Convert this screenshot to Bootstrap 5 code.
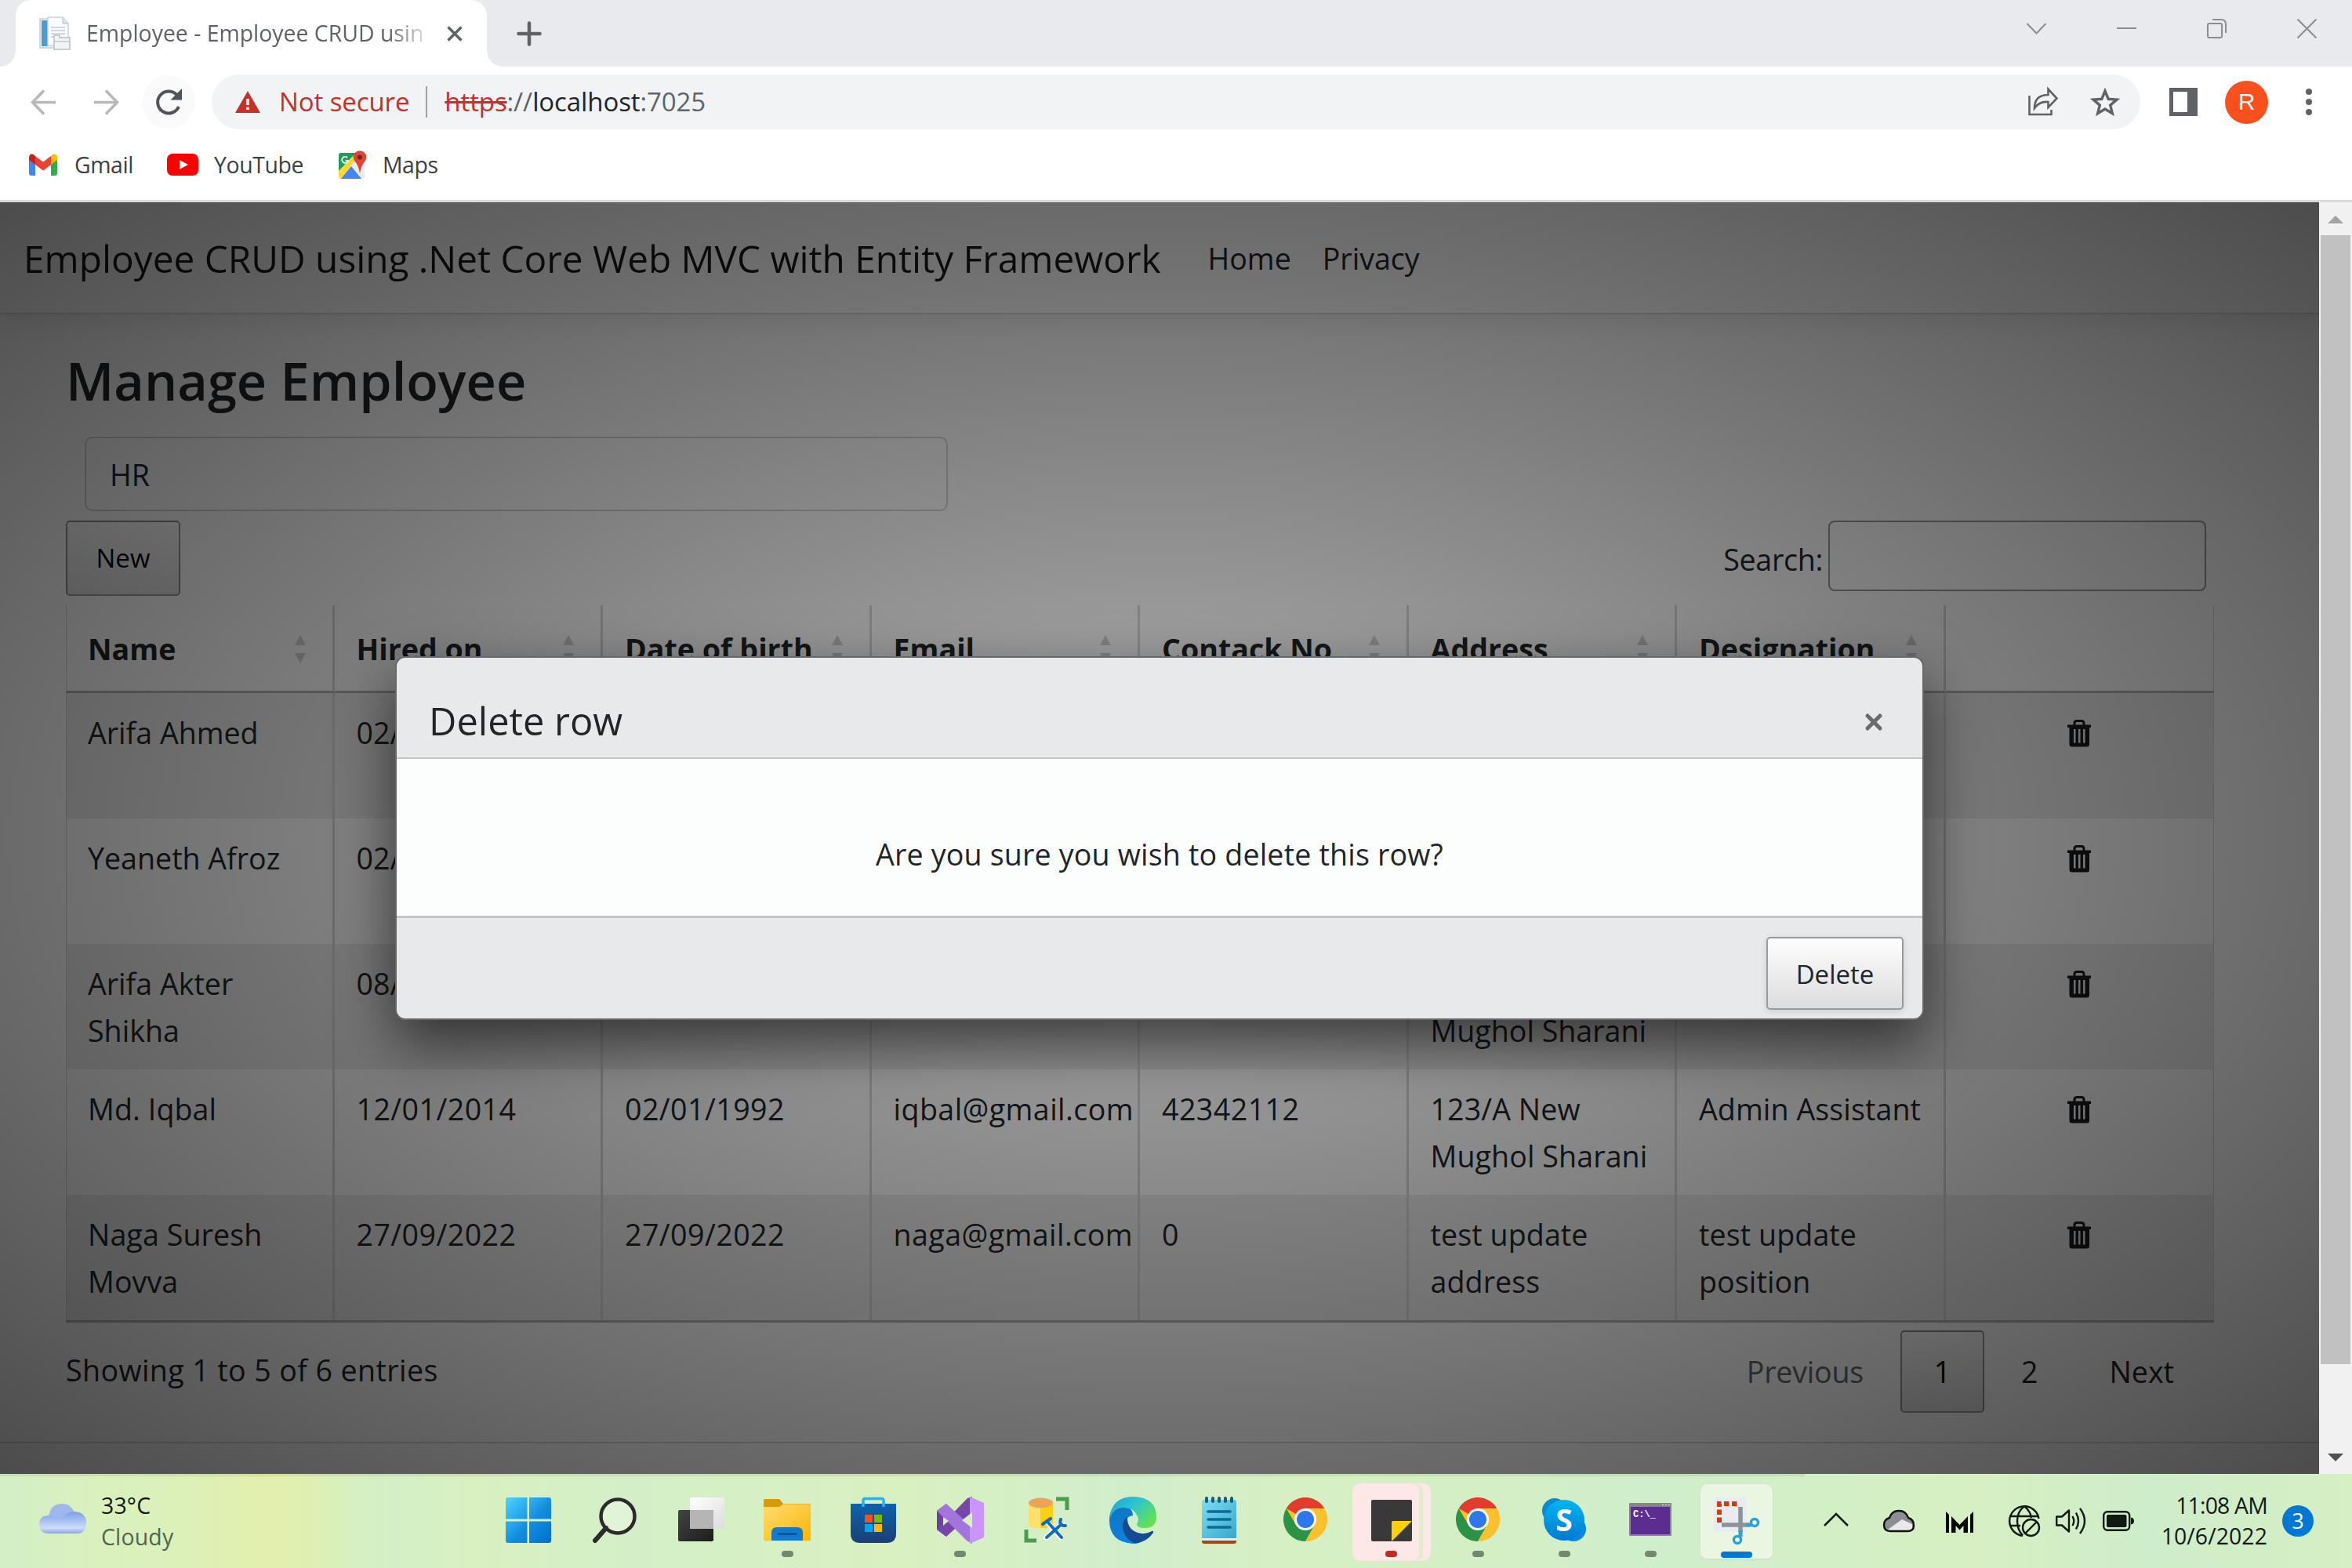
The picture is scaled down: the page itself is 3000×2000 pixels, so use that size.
<!DOCTYPE html>
<html lang="en">
<head>
<meta charset="utf-8">
<title>Employee - Employee CRUD using .Net Core Web MVC</title>
<link href="https://cdn.jsdelivr.net/npm/bootstrap@5.3.0/dist/css/bootstrap.min.css" rel="stylesheet">
<style>
  html { font-size: 40px; }
  body { width: 3000px; height: 2000px; overflow: hidden; font-family: "Open Sans", "Noto Sans", sans-serif; font-size: 37.6px; line-height: 60px; color: #212529; background: #fff; }
  svg { display: block; flex: none; overflow: visible; }

  /* browser frame */
  .tabstrip { height: 85px; background: #e8eaed; padding-left: 20px; flex: none; }
  .tab-active { width: 601px; height: 85px; background: #fff; border-radius: 20px 20px 0 0; padding-left: 30px; position: relative; }
  .tab-active::before, .tab-active::after { content: ""; position: absolute; bottom: 0; width: 20px; height: 20px; }
  .tab-active::before { left: -20px; background: radial-gradient(circle at 0 0, transparent 19.5px, #fff 20px); }
  .tab-active::after { right: -20px; background: radial-gradient(circle at 100% 0, transparent 19.5px, #fff 20px); }
  .tab-title { width: 437px; margin: -2px 0 0 20px; font-size: 28.4px; color: #5f6368; white-space: nowrap; -webkit-mask-image: linear-gradient(90deg, #000 385px, transparent 445px); mask-image: linear-gradient(90deg, #000 385px, transparent 445px); }
  .win-controls { margin-right: 45px; gap: 90px; padding-bottom: 12px; }
  .toolbar { height: 90px; flex: none; }
  .reload { width: 68px; height: 68px; border-radius: 50%; background: #fafafa; margin-left: 29px; }
  .omnibox { width: 2460px; height: 70px; border-radius: 35px; background: #f1f3f4; margin-left: 21px; padding: 0 26px 0 30px; font-size: 33px; color: #5f6368; letter-spacing: -.1px; }
  .warn { color: #c5302a; }
  .omni-sep { width: 2px; height: 40px; background: #9aa0a6; margin: 0 22px 0 21px; }
  .avatar { width: 55px; height: 55px; border-radius: 50%; background: #f8511d; color: #fff; font: 30px "Liberation Sans", sans-serif; margin-left: 35px; }
  .bookmarks { height: 80px; padding: 0 0 10px 37px; font-size: 28.4px; color: #3c4043; flex: none; letter-spacing: -.4px; }
  .frame-line { height: 3px; background: #d9dadb; flex: none; }

  /* web page */
  .viewport { height: 1622px; flex: none; }
  .site { width: 2958px; height: 1622px; position: relative; overflow: hidden; background: #fff; }
  .site-nav { height: 143px; padding: 2px 0 0 30px; border-bottom: 2px solid #d8dce0; box-shadow: 0 10px 30px rgba(0,0,0,.07); }
  .site-nav .navbar-brand { font-size: 47.75px; padding: 0; margin: 0 40px 0 0; color: #000; opacity: .9; line-height: 60px; }
  .site-nav .nav-link { padding: 0 20px; font-size: 37.6px; color: #212529; }
  .site-body { padding: 42px 0 0 84px; width: 2824px; }
  .page-title { font-size: 66.6px; font-weight: 600; line-height: 85px; margin: 0 0 29px 0; }
  .dept-select { width: 1101px; height: 95px; margin-left: 24px; border: 2px solid #ced4da; border-radius: 10px; padding: 3px 30px 0; font-size: 37.6px; background: transparent; color: #212529; }
  .btn-dt { border: 2px solid rgba(0,0,0,.38); border-radius: 5px; color: #000; font-size: 33px; line-height: 60px; padding: 0; background: linear-gradient(rgba(230,230,230,.1), rgba(0,0,0,.12)); }
  .btn-new { width: 146px; height: 96px; }
  .search-label { margin-right: 10px; gap: 7px; letter-spacing: -.3px; }
  .search-box { width: 482px; height: 90px; border: 2px solid #999; border-radius: 8px; background: transparent; padding: 0; }
  .emp-table { width: 2740px; table-layout: fixed; border-collapse: separate; border-spacing: 0; margin: 12px 0 0; border-bottom: 3px solid #b3b3b3; }
  .emp-table th { height: 112px; padding: 3px 20px 0 28px; border-bottom: 3px solid #b3b3b3; vertical-align: middle; }
  .emp-table td { height: 160px; padding: 21px 15px 0 28px; vertical-align: top; }
  .emp-table th, .emp-table td { border-right: 3px solid #d3d8dc; }
  .emp-table th:first-child, .emp-table td:first-child { border-left: 1px solid #d3d8dc; padding-left: 27px; }
  .emp-table th:last-child, .emp-table td:last-child { border-right-width: 1px; }
  .emp-table tbody tr:nth-child(odd) td { background: rgba(0,0,0,.07); }
  .emp-table td:last-child { padding: 34px 0 0; }
  .wide-fig td { letter-spacing: .45px; }
  .wide-fig td:first-child, .wide-fig td:nth-child(n+6) { letter-spacing: .1px; }
  .trash { width: 30px; height: 35px; margin: 0 auto; }
  .sorter { margin-right: 14px; color: #cfd1d3; }
  .pager { margin: 10px 10px 0 0; }
  .pager-info { margin-top: -4px; letter-spacing: .4px; }
  .pager-num { width: 107px; height: 105px; font-size: 37.6px; }
  .site-foot { margin-top: 37px; border-top: 2px solid #d8dce0; }

  /* dialog lightbox */
  .lightbox { position: absolute; inset: 0; background: radial-gradient(ellipse farthest-corner at center, rgba(0,0,0,.3) 0%, rgba(0,0,0,.7) 100%); }
  .dialog-box { position: absolute; left: 504px; top: 579px; width: 1950px; height: 464px; border: 2px solid #66686a; border-radius: 13px; overflow: visible; box-shadow: 0 30px 75px rgba(0,0,0,.6); background: #e8e9eb; }
  .dialog-box .modal-header { height: 129px; padding: 33px 51px 0 41px; border-bottom: 2px solid #c3c5c7; align-items: center; }
  .dialog-box .modal-title { font-size: 48.8px; font-weight: 400; line-height: 60px; }
  .dialog-box .modal-body { height: 203px; flex: none; padding: 92px 0 0; background: #fcfdfd; border-bottom: 3px solid #c3c5c7; letter-spacing: .18px; }
  .dialog-box .modal-footer { height: 128px; border: 0; padding: 24px 24px 0 0; align-items: flex-start; }
  .btn-delete { width: 175px; height: 93px; margin: 0; padding-top: 2px; border-color: #989a9b; color: #212529; background: linear-gradient(#fff, #eee 45%, #ddd); box-shadow: 0 2px 8px rgba(0,0,0,.12); }

  .scroller { width: 42px; background: #f1f1f1; padding: 17px 0 16px; }
  .scroller-thumb { width: 38px; height: 1440px; background: #c1c1c1; margin-top: 15px; margin-bottom: auto; }

  /* taskbar */
  .taskbar { height: 120px; flex: none; background: linear-gradient(90deg, #d3efc8 0, #d9f0bf 90px, #dcf0b9 230px, #e2efae 320px, #e2efae 370px, #d9f0bb 430px, #d4efc8 500px, #d9f0c0 600px, #d4efc8 800px, #d9f0c0 1150px, #d1eecb 1440px, #d7efc3 1660px, #d4efc6 1900px, #cfeecb 2100px, #d3efc7 2320px, #d7efc2 2520px, #ceedca 2740px, #d6efc4 3000px); }
  .taskbar-edge { width: 2302px; height: 3px; background: rgba(90,100,60,.12); }
  .tb-row { height: 117px; }
  .weather { width: 619px; padding-left: 50px; font-size: 28.4px; line-height: 40px; color: #0f190c; }
  .weather-text { margin: -4px 0 0 19px; letter-spacing: .2px; }
  .weather-sub { color: #53654c; }
  .tb-app { width: 110.1px; height: 99px; padding-top: 18px; position: relative; }
  .tb-dot { width: 15px; height: 8px; border-radius: 4px; background: #75876f; margin-top: 10px; }
  .tb-alert { width: 85px; height: 99px; border-radius: 10px; background: #fde7e7; padding-top: 18px; margin-left: 5px; box-shadow: 5px 0 0 #e3ecd3, 15px 0 0 #fde7e7; }
  .tb-on { width: 94px; height: 99px; border-radius: 10px; background: #e8f6e2; border: 1px solid #d3e6ca; border-bottom-width: 3px; padding-top: 17px; }
  .tray { color: #101a10; margin: -4px 49px 0 0; }
  .clock { width: 170px; font-size: 28.4px; line-height: 39px; text-align: right; letter-spacing: .1px; }
  .clock-time { letter-spacing: -.8px; }
  .notif { width: 40px; height: 40px; border-radius: 50%; background: #0078d4; color: #fff; font-size: 27px; margin-left: 19px; }
</style>
</head>
<body class="d-flex flex-column m-0">

<svg width="0" height="0" class="position-absolute">
  <defs>
    <linearGradient id="gWin2" gradientUnits="userSpaceOnUse" x1="0" y1="0" x2="58" y2="58"><stop offset="0" stop-color="#4dd5ff"/><stop offset=".55" stop-color="#138de0"/><stop offset="1" stop-color="#006fce"/></linearGradient>
    <linearGradient id="gCloud" x1="0" y1="0" x2="0" y2="1"><stop offset="0" stop-color="#7b9fe8"/><stop offset=".75" stop-color="#cddcf8"/><stop offset="1" stop-color="#86a5ea"/></linearGradient>
    <linearGradient id="gFold" x1="0" y1="0" x2="1" y2="1"><stop offset="0" stop-color="#ffdc73"/><stop offset="1" stop-color="#fbb505"/></linearGradient>
    <linearGradient id="gBlue" x1="0" y1="0" x2="0" y2="1"><stop offset="0" stop-color="#0d63ad"/><stop offset="1" stop-color="#1b3f75"/></linearGradient>
    <linearGradient id="gPaper" x1="0" y1="0" x2="1" y2="1"><stop offset="0" stop-color="#fff"/><stop offset="1" stop-color="#dcdcdc"/></linearGradient>
    <linearGradient id="gInk" x1="0" y1="0" x2="1" y2="1"><stop offset="0" stop-color="#444"/><stop offset="1" stop-color="#1c1c1c"/></linearGradient>
    <linearGradient id="gNote" x1="0" y1="0" x2="1" y2="1"><stop offset="0" stop-color="#7fdcf0"/><stop offset="1" stop-color="#35a8cf"/></linearGradient>
    <linearGradient id="gEdgeTop" x1="0" y1="0" x2="1" y2=".7"><stop offset="0" stop-color="#1f9fd8"/><stop offset=".45" stop-color="#2bc3d2"/><stop offset="1" stop-color="#67e24e"/></linearGradient>
    <linearGradient id="gEdgeLeft" x1="0" y1="0" x2=".4" y2="1"><stop offset="0" stop-color="#1173bf"/><stop offset="1" stop-color="#0b84dc"/></linearGradient>
    <linearGradient id="gSky" x1="0" y1="0" x2="0" y2="1"><stop offset="0" stop-color="#00b7f0"/><stop offset="1" stop-color="#0078d4"/></linearGradient>
    <symbol id="trash" viewBox="0 0 30 35">
      <path d="M9 7V4.500Q9 1.500 12 1.500H18Q21 1.500 21 4.500V7" fill="none" stroke="#161a1d" stroke-width="3"/>
      <path fill="#161a1d" fill-rule="evenodd" d="M0 6.500H30V10H28V31Q28 34.500 25 34.500H5.500Q2.500 34.500 2.500 31V10H0ZM8 12V29.500H10.500V12ZM14 12V29.500H16.500V12ZM20 12V29.500H22.500V12Z"/>
    </symbol>
    <symbol id="sort" viewBox="0 0 14 36"><path fill="currentColor" d="M7 0L14 13H0ZM7 36L0 23H14Z"/></symbol>
    <symbol id="chrome" viewBox="0 0 56 56">
      <circle cx="28" cy="28" r="28" fill="#fbc02d"/>
      <path fill="#e33b2e" d="M28 28L3.700 14A28 28 0 0 1 52.300 14H28Z"/>
      <path fill="#2a9346" d="M28 56A28 28 0 0 1 3.700 14L16 35L28 41L40 35Z"/>
      <path fill="#fbc02d" d="M28 56L40.500 34L40 14H52.300A28 28 0 0 1 28 56Z"/>
      <circle cx="28" cy="28" r="14" fill="#fff"/><circle cx="28" cy="28" r="11" fill="#2f78ec"/>
    </symbol>
  </defs>
</svg>

<header class="tabstrip d-flex">
  <div class="tab-active d-flex align-items-center">
    <svg width="40" height="42" viewBox="0 0 40 42">
      <rect x="1" y="2" width="24" height="37" fill="#eef2f5" stroke="#c5ced6" stroke-width="1.500"/><rect x="3" y="4" width="8" height="33" fill="#4e9bd0"/>
      <path d="M11 0H30L37 8V36H11Z" fill="#fafbfc" stroke="#ccd2d8" stroke-width="1.500"/><path d="M30 0V8H37" fill="#dde3e8" stroke="#b9c1c8"/>
      <path d="M15 13H33M15 17H33M15 21H33M15 25H20" stroke="#d2d8de" stroke-width="2"/>
      <path d="M19 23H26V26H39V41H19Z" fill="#f2f4f5" stroke="#b8bfc5" stroke-width="1.500"/><path d="M20 31H38" stroke="#cdd3d8" stroke-width="2"/>
    </svg>
    <span class="tab-title">Employee - Employee CRUD usin</span>
    <svg width="20" height="20" style="margin-left:23px" viewBox="0 0 20 20"><path d="M1.500 1.500L18.500 18.500M18.500 1.500L1.500 18.500" stroke="#5f6368" stroke-width="3.500"/></svg>
  </div>
  <svg class="align-self-center" width="30" height="30" style="margin-left:39px" viewBox="0 0 30 30"><path d="M15 1.500V28.500M1.500 15H28.500" stroke="#5f6368" stroke-width="4.500" stroke-linecap="round"/></svg>
  <div class="win-controls d-flex align-items-center ms-auto">
    <svg width="25" height="25" viewBox="0 0 25 25" fill="none" stroke="#8c8d90" stroke-width="2"><path d="M.5 6L12.500 18.500L24.500 6"/></svg>
    <svg width="25" height="25" viewBox="0 0 25 25" fill="none" stroke="#8c8d90" stroke-width="2"><path d="M0 12H25"/></svg>
    <svg width="25" height="25" viewBox="0 0 25 25" fill="none" stroke="#8c8d90" stroke-width="2"><rect x="1" y="6" width="18" height="18" rx="2"/><path d="M7 1H18Q24 1 24 7V18"/></svg>
    <svg width="25" height="25" viewBox="0 0 25 25" fill="none" stroke="#8c8d90" stroke-width="2"><path d="M.5.5L24.500 24.500M24.500.5L.5 24.500"/></svg>
  </div>
</header>

<div class="toolbar d-flex align-items-center">
  <svg width="33" height="33" style="margin-left:39px" viewBox="0 0 33 33" fill="none" stroke="#b6b8ba" stroke-width="3.500"><path d="M32 16.500H3M17 1.500L2.500 16.500L17 31.500"/></svg>
  <svg width="33" height="33" style="margin-left:47px" viewBox="0 0 33 33" fill="none" stroke="#b6b8ba" stroke-width="3.500"><path d="M1 16.500H30M16 1.500L30.500 16.500L16 31.500"/></svg>
  <div class="reload d-flex align-items-center justify-content-center">
    <svg width="34" height="34" viewBox="0 0 34 34"><path d="M30 23A14 14 0 1 1 27 7.500" fill="none" stroke="#50545a" stroke-width="4"/><path d="M34 0V14.500H19.500Z" fill="#50545a"/></svg>
  </div>
  <div class="omnibox d-flex align-items-center">
    <svg width="32" height="28" viewBox="0 0 32 28"><path d="M16 0L32 28H0Z" fill="#c5302a"/><path d="M14.200 10H17.800V18H14.200ZM14.200 20.500H17.800V24H14.200Z" fill="#f1f3f4"/></svg>
    <span class="warn text-nowrap" style="margin-left:24px">Not secure</span>
    <span class="omni-sep"></span>
    <span class="text-nowrap"><span class="warn text-decoration-line-through">https</span>://<span class="text-dark">localhost</span>:7025</span>
    <svg class="ms-auto" width="38" height="36" viewBox="0 0 38 36" fill="none" stroke="#5f6368" stroke-width="2.600"><path d="M1.500 10V34H29.500V28"/><path d="M8 26Q8 9 25.500 9V1.500L36.500 13.500L25.500 25V18Q14 17 8 26Z"/></svg>
    <svg width="38" height="36" style="margin-left:41px" viewBox="0 0 38 36" fill="none" stroke="#5f6368" stroke-width="3.400"><path d="M19 4L23.200 14.300L34 15.100L25.700 22.200L28.300 32.700L19 27L9.700 32.700L12.300 22.200L4 15.100L14.800 14.300Z"/></svg>
  </div>
  <svg width="36" height="36" style="margin-left:37px" viewBox="0 0 36 36"><path fill="#5f6368" fill-rule="evenodd" d="M0 0H36V36H0ZM5 5V31H23V5Z"/></svg>
  <div class="avatar d-flex align-items-center justify-content-center">R</div>
  <svg width="8" height="34" style="margin-left:48px" viewBox="0 0 8 34" fill="#5f6368"><circle cx="4" cy="4" r="4"/><circle cx="4" cy="17" r="4"/><circle cx="4" cy="30" r="4"/></svg>
</div>

<div class="bookmarks d-flex align-items-center">
  <svg width="36" height="28" viewBox="0 0 36 28"><path fill="#4285f4" d="M0 4L8 10V28H3Q0 28 0 25Z"/><path fill="#34a853" d="M36 4L28 10V28H33Q36 28 36 25Z"/><path fill="#fbbc04" d="M28 3Q30 0 33 .5Q36 1 36 5V8L28 14Z"/><path fill="#c5221f" d="M8 3Q6 0 3 .5Q0 1 0 5V8L8 14Z"/><path fill="#ea4335" d="M8 3L18 10.500L28 3V14L18 21.500L8 14Z"/></svg>
  <span style="margin-left:22px">Gmail</span>
  <svg width="40" height="28" style="margin-left:43px" viewBox="0 0 40 28"><rect width="40" height="28" rx="7" fill="#f00"/><path d="M16 8L27 14L16 20Z" fill="#fff"/></svg>
  <span style="margin-left:20px">YouTube</span>
  <svg width="36" height="36" style="margin-left:45px" viewBox="0 0 36 36"><rect y="3" width="33" height="33" rx="3" fill="#e8eaed"/><path d="M0 6Q0 3 3 3H25L2 33Q0 33 0 31Z" fill="#1e9e56"/><path d="M0 26L22 3H28L3 36Q0 36 0 32Z" fill="#fdd835"/><path d="M3 36L16 20L29 36Z" fill="#4285f4"/><path d="M27 29Q25 18 20 13A8.300 8.300 0 1 1 34 13Q29 18 27 29Z" fill="#db4437"/><circle cx="27" cy="8.500" r="3" fill="#7b231c"/><path d="M11 9A4 4 0 1 0 12 13H8.500" fill="none" stroke="#fff" stroke-width="1.800"/></svg>
  <span style="margin-left:20px">Maps</span>
</div>
<div class="frame-line"></div>

<div class="viewport d-flex">
  <div class="site">
    <nav class="site-nav navbar navbar-expand justify-content-start">
      <a class="navbar-brand" href="#">Employee CRUD using .Net Core Web MVC with Entity Framework</a>
      <ul class="navbar-nav">
        <li class="nav-item"><a class="nav-link" href="#">Home</a></li>
        <li class="nav-item"><a class="nav-link" href="#">Privacy</a></li>
      </ul>
    </nav>

    <main class="site-body">
      <h3 class="page-title">Manage Employee</h3>
      <div class="dept-select form-control d-flex align-items-center">HR</div>
      <div class="d-flex justify-content-between align-items-start" style="margin-top:12px">
        <button class="btn btn-dt btn-new" type="button">New</button>
        <label class="search-label d-flex align-items-center"><span class="pt-1" style="line-height:52px">Search:</span><input class="search-box" type="search"></label>
      </div>

      <table class="emp-table">
        <thead>
          <tr>
            <th><div class="d-flex align-items-center justify-content-between">Name<svg class="sorter" width="14" height="36"><use href="#sort"/></svg></div></th>
            <th><div class="d-flex align-items-center justify-content-between">Hired on<svg class="sorter" width="14" height="36"><use href="#sort"/></svg></div></th>
            <th><div class="d-flex align-items-center justify-content-between text-nowrap">Date of birth<svg class="sorter" width="14" height="36"><use href="#sort"/></svg></div></th>
            <th><div class="d-flex align-items-center justify-content-between">Email<svg class="sorter" width="14" height="36"><use href="#sort"/></svg></div></th>
            <th><div class="d-flex align-items-center justify-content-between text-nowrap">Contack No<svg class="sorter" width="14" height="36"><use href="#sort"/></svg></div></th>
            <th><div class="d-flex align-items-center justify-content-between">Address<svg class="sorter" width="14" height="36"><use href="#sort"/></svg></div></th>
            <th><div class="d-flex align-items-center justify-content-between">Designation<svg class="sorter" width="14" height="36"><use href="#sort"/></svg></div></th>
            <th></th>
          </tr>
        </thead>
        <tbody>
          <tr><td>Arifa Ahmed</td><td>02/</td><td></td><td></td><td></td><td></td><td></td><td><svg class="trash"><use href="#trash"/></svg></td></tr>
          <tr><td>Yeaneth Afroz</td><td>02/</td><td></td><td></td><td></td><td></td><td></td><td><svg class="trash"><use href="#trash"/></svg></td></tr>
          <tr><td>Arifa Akter Shikha</td><td>08/</td><td></td><td></td><td></td><td>123/A New Mughol Sharani</td><td></td><td><svg class="trash"><use href="#trash"/></svg></td></tr>
          <tr class="wide-fig"><td>Md. Iqbal</td><td>12/01/2014</td><td>02/01/1992</td><td>iqbal@gmail.com</td><td>42342112</td><td>123/A New Mughol Sharani</td><td class="text-nowrap">Admin Assistant</td><td><svg class="trash"><use href="#trash"/></svg></td></tr>
          <tr class="wide-fig"><td>Naga Suresh Movva</td><td>27/09/2022</td><td>27/09/2022</td><td>naga@gmail.com</td><td>0</td><td>test update address</td><td>test update position</td><td><svg class="trash"><use href="#trash"/></svg></td></tr>
        </tbody>
      </table>

      <div class="pager d-flex align-items-center">
        <span class="pager-info">Showing 1 to 5 of 6 entries</span>
        <div class="d-flex align-items-center ms-auto" style="padding-right:41px">
          <span style="color:#666;letter-spacing:-.2px">Previous</span>
          <button class="btn btn-dt pager-num" type="button" style="margin:0 47px">1</button>
          <span>2</span>
          <span style="margin-left:91px">Next</span>
        </div>
      </div>
    </main>
    <footer class="site-foot"></footer>

    <div class="lightbox"></div>
    <div class="dialog-box modal-content" role="dialog">
      <div class="modal-header d-flex justify-content-between">
        <h5 class="modal-title">Delete row</h5>
        <svg width="22" height="22" style="margin-top:4px" viewBox="0 0 22 22"><path d="M3 3L19 19M19 3L3 19" stroke="#6a6b6c" stroke-width="5" stroke-linecap="round"/></svg>
      </div>
      <div class="modal-body text-center">Are you sure you wish to delete this row?</div>
      <div class="modal-footer justify-content-end">
        <button class="btn btn-dt btn-delete" type="button">Delete</button>
      </div>
    </div>
  </div>

  <div class="scroller d-flex flex-column align-items-center">
    <svg width="20" height="10" viewBox="0 0 20 10"><path d="M10 0L20 10H0Z" fill="#a3a3a3"/></svg>
    <div class="scroller-thumb"></div>
    <svg width="20" height="10" viewBox="0 0 20 10"><path d="M0 0H20L10 10Z" fill="#505050"/></svg>
  </div>
</div>

<footer class="taskbar">
  <div class="taskbar-edge"></div>
  <div class="tb-row d-flex align-items-center">
    <div class="weather d-flex align-items-center">
      <svg width="60" height="38" style="margin-top:-9px" viewBox="0 0 60 38"><path d="M12 17Q14 0 29 0Q41 0 45 12L40 30H14Z" fill="#9db8ef"/><path d="M45 10Q60 11 60 24Q60 38 48 38H12Q0 38 0 26Q0 15 12 15Q21 15 26 21Q34 10 45 10Z" fill="url(#gCloud)"/></svg>
      <div class="weather-text"><div>33°C</div><div class="weather-sub">Cloudy</div></div>
    </div>

    <div class="tb-app d-flex flex-column align-items-center">
      <svg width="58" height="58" viewBox="0 0 58 58" fill="url(#gWin2)"><path d="M3 0H27.500V27.500H0V3Q0 0 3 0ZM30 0H55Q58 0 58 3V27.500H30ZM0 30.500H27.500V58H3Q0 58 0 55ZM30 30.500H58V55Q58 58 55 58H30Z"/></svg>
    </div>
    <div class="tb-app d-flex flex-column align-items-center">
      <svg width="56" height="58" viewBox="0 0 56 58"><circle cx="32" cy="24" r="21.500" fill="#fff" fill-opacity=".3" stroke="#2b2b2b" stroke-width="4.500"/><path d="M17 39L3 55" stroke="#2b2b2b" stroke-width="6" stroke-linecap="round"/></svg>
    </div>
    <div class="tb-app d-flex flex-column align-items-center">
      <svg width="60" height="58" viewBox="0 0 60 58"><rect x="1" y="16" width="45" height="40" rx="2" fill="url(#gInk)"/><rect x="16" y="0" width="44" height="40" rx="2" fill="url(#gPaper)"/><path d="M16 16H46V40H16Z" fill="#b5b5b5"/></svg>
    </div>
    <div class="tb-app d-flex flex-column align-items-center">
      <svg width="60" height="58" viewBox="0 0 60 58"><path d="M0 4Q0 2 2 2H20L25 8H58Q60 8 60 10V30H0Z" fill="#d99a06"/><path d="M0 12H20L25 8.500H58Q60 8.500 60 11V53Q60 55 58 55H2Q0 55 0 53Z" fill="url(#gFold)"/><path d="M10 55V45Q10 38 17 38H43Q50 38 50 45V55Z" fill="#1279cb"/><path d="M19 46.500H41" stroke="#0a4f92" stroke-width="2.500" stroke-linecap="round"/></svg>
      <span class="tb-dot"></span>
    </div>
    <div class="tb-app d-flex flex-column align-items-center">
      <svg width="58" height="58" viewBox="0 0 58 58"><path d="M16 12V4Q16 1.500 18.500 1.500H39.500Q42 1.500 42 4V12" fill="none" stroke="#2bb3ee" stroke-width="3.500"/><path d="M0 8H58V46Q58 58 46 58H12Q0 58 0 46Z" fill="url(#gBlue)"/><path d="M16 7V12M42 7V12" stroke="#2bb3ee" stroke-width="3.500"/><path fill="#f25022" d="M18 22H28V32H18Z"/><path fill="#7fba00" d="M30 22H40V32H30Z"/><path fill="#00a4ef" d="M18 34H28V44H18Z"/><path fill="#ffb900" d="M30 34H40V44H30Z"/></svg>
    </div>
    <div class="tb-app d-flex flex-column align-items-center">
      <svg width="60" height="60" viewBox="0 0 60 60" style="margin-top:-1px"><path d="M0 18L12 9V51L0 42Z" fill="#6e43a5"/><path d="M12 51L0 42L39 2L45 0V21Z" fill="#7447a8"/><path d="M0 42V18L4 22V38Z" fill="#6a3f9e"/><path d="M0 18L12 9L45 39V60L38 56Z" fill="#a374dc"/><path d="M8 26L15 31L8 37Z" fill="#d6f0c4"/><path d="M42 0L60 8V52L42 60Z" fill="#c995fb"/><path d="M45 20V40L32 30Z" fill="#d6f0c4"/></svg>
      <span class="tb-dot" style="margin-top:9px"></span>
    </div>
    <div class="tb-app d-flex flex-column align-items-center">
      <svg width="58" height="58" viewBox="0 0 58 58"><path d="M6 7V33Q6 39 21 39Q37 39 37 33V7Z" fill="#fbd010"/><path d="M6 7V33Q6 39 21 39V7Z" fill="#fde06c"/><ellipse cx="21.500" cy="7" rx="15.500" ry="6.500" fill="#eba456"/><path d="M41 2H55V16" fill="none" stroke="#4b9c4c" stroke-width="5"/><path d="M3 41V55H16" fill="none" stroke="#4b9c4c" stroke-width="5"/><g stroke="#fff" stroke-width="7" fill="none" stroke-linecap="round"><path d="M29 51L48 34M47 51L31 33"/></g><g stroke="#0f6cba" stroke-width="4" fill="none" stroke-linecap="round"><path d="M29 51L48 34M48 51L30 31M24 34L34 27M47 28Q44 37 53 36"/></g></svg>
    </div>
    <div class="tb-app d-flex flex-column align-items-center">
      <svg width="60" height="60" viewBox="0 0 60 60" style="margin-top:-1px"><path d="M0 30Q0 12 14 12Q30 12 30 24Q20 25 20 36Q22 54 44 54L38 59Q34 60 30 60Q0 58 0 30Z" fill="url(#gEdgeLeft)"/><path d="M0 29Q2 0 31 0Q60 1 60 26Q60 40 45 40Q35 40 35 35Q38 30 36 25Q31 14 18 14Q5 14 0 29Z" fill="url(#gEdgeTop)"/><path d="M23 25Q14 33 18 44Q22 56 33 59.500Q48 58 56 46Q57 43 54 44Q46 49 36 46Q22 41 23 25Z" fill="#134c92"/></svg>
    </div>
    <div class="tb-app d-flex flex-column align-items-center">
      <svg width="44" height="60" viewBox="0 0 44 60" style="margin-top:-1px"><path d="M0 50H44V57Q44 60 41 60H3Q0 60 0 57Z" fill="#a04a10"/><path d="M0 50H44V56H0Z" fill="#e8eef0"/><path d="M0 7Q0 4 3 4H41Q44 4 44 7V53H0Z" fill="url(#gNote)"/><path d="M6 2V6M14 2V6M22 2V6M30 2V6M38 2V6" stroke="#0f5f86" stroke-width="4" stroke-linecap="round"/><path d="M8 19H36M8 29H36M8 39H36" stroke="#0c6b94" stroke-width="3.500" stroke-linecap="round"/></svg>
    </div>
    <div class="tb-app d-flex flex-column align-items-center">
      <svg width="56" height="56"><use href="#chrome"/></svg>
    </div>
    <div class="d-flex" style="width:110.1px">
      <div class="tb-alert d-flex flex-column align-items-center">
        <svg width="52" height="58" viewBox="0 0 52 58" style="margin-left:15px"><rect y="3" width="52" height="53" rx="2" fill="#393939"/><path d="M26 56V32Q26 30 28 30H52Z" fill="#fdd106"/></svg>
        <span class="tb-dot" style="background:#c42b1c;margin-left:15px"></span>
      </div>
    </div>
    <div class="tb-app d-flex flex-column align-items-center">
      <svg width="56" height="58"><use href="#chrome" width="56" height="56"/></svg>
      <span class="tb-dot"></span>
    </div>
    <div class="tb-app d-flex flex-column align-items-center">
      <svg width="56" height="58" viewBox="0 0 56 58"><circle cx="16" cy="17" r="16" fill="#0a8ad6"/><circle cx="40" cy="40" r="16" fill="#0a86da"/><circle cx="28" cy="29" r="26" fill="url(#gSky)"/><text x="28" y="43" text-anchor="middle" font-family="Open Sans, sans-serif" font-weight="700" font-size="39" fill="#fff">S</text></svg>
      <span class="tb-dot"></span>
    </div>
    <div class="tb-app d-flex flex-column align-items-center">
      <svg width="54" height="58" viewBox="0 0 54 58"><rect y="7" width="54" height="42" rx="1" fill="#85858b"/><rect x="2" y="12" width="50" height="35" fill="#5c2d91"/><path d="M42 9.500H52" stroke="#c9c9cc" stroke-width="1.500" stroke-dasharray="2"/><text x="5" y="25" font-family="Liberation Mono, monospace" font-weight="700" font-size="12" fill="#fff">C:\_</text></svg>
      <span class="tb-dot"></span>
    </div>
    <div class="d-flex justify-content-center" style="width:110.1px">
      <div class="tb-on d-flex flex-column align-items-center">
        <svg width="58" height="60" viewBox="0 0 58 60"><rect x="0" y="0" width="42" height="44" rx="3" fill="#e9eaf2"/><path d="M7 32V8H32" fill="none" stroke="#d83b01" stroke-width="6" stroke-dasharray="6.500 3.500"/><path d="M34 12V44" stroke="#8b9299" stroke-width="5.500"/><path d="M10 35H44" stroke="#8b9299" stroke-width="5.500"/><path d="M34 42V50M42 35H48" stroke="#2ba0da" stroke-width="5"/><circle cx="52" cy="32" r="4.500" fill="#fff" stroke="#2ba0da" stroke-width="3.500"/><circle cx="30" cy="54" r="4.500" fill="#fff" stroke="#2ba0da" stroke-width="3.500"/></svg>
        <span class="tb-dot" style="width:40px;background:#0078d4;margin-top:9px"></span>
      </div>
    </div>

    <div class="tray d-flex align-items-center ms-auto">
      <svg width="32" height="18" style="margin-top:-4px" viewBox="0 0 32 18" fill="none" stroke="#101a10" stroke-width="2.500"><path d="M1 17L16 2L31 17"/></svg>
      <svg width="40" height="28" style="margin-left:44px" viewBox="0 0 40 28"><path d="M9 27Q1 27 1 19Q1 12 8 10Q11 1 20 1Q29 1 32 10Q39 12 39 20Q39 27 31 27Z" fill="#8d8d93"/><path d="M6 25L24 12L37 18Q39 27 31 27H9Z" fill="#e9e9ec"/><path d="M9 27Q1 27 1 19Q1 12 8 10Q11 1 20 1Q29 1 32 10Q39 12 39 20Q39 27 31 27Z" fill="none" stroke="#111" stroke-width="2.400"/></svg>
      <svg width="35" height="27" style="margin:3px 0 0 40px" viewBox="0 0 35 27" fill="#000"><path d="M0 0L4 4V27H0ZM35 0L31 4V27H35ZM7 6L17.500 17L28 6V27H22.500V18L17.500 23.500L12.500 18V27H7Z"/></svg>
      <svg width="40" height="40" style="margin-left:45px" viewBox="0 0 40 40" fill="none" stroke="#101a10" stroke-width="2.400"><path d="M38.500 17A18.800 18.800 0 1 0 18 38.800"/><path d="M18 38.500Q11 31 11 20Q11 8 20 1.200Q28 8 29 16M3 14H38M3 26H15"/><circle cx="28.500" cy="28.500" r="10.500"/><path d="M21.500 35.500L35.500 21.500"/></svg>
      <svg width="40" height="34" style="margin-left:20px" viewBox="0 0 40 34" fill="none" stroke="#101a10" stroke-width="2.400"><path d="M1.200 11.500H8L17 3.500V30.500L8 22.500H1.200Z" stroke-linejoin="round"/><path d="M21.500 11Q25 17 21.500 23M26 6.500Q32 17 26 27.500M31 1Q43 17 31 33"/></svg>
      <svg width="40" height="26" style="margin-left:20px" viewBox="0 0 40 26"><rect x="1.200" y="1.200" width="33" height="23.600" rx="5" fill="none" stroke="#101a10" stroke-width="2.400"/><rect x="5" y="5" width="25.500" height="16" rx="2" fill="#101a10"/><path d="M36 8.500Q40 9 40 13Q40 17 36 17.500Z" fill="#101a10"/></svg>
      <div class="clock"><div class="clock-time">11:08 AM</div><div>10/6/2022</div></div>
      <div class="notif d-flex align-items-center justify-content-center">3</div>
    </div>
  </div>
</footer>

<script src="https://cdn.jsdelivr.net/npm/bootstrap@5.3.0/dist/js/bootstrap.bundle.min.js"></script>
</body>
</html>
